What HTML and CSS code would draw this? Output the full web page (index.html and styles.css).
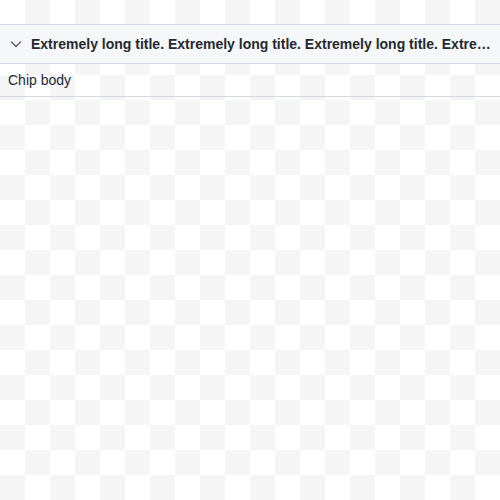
FILE: index.html
```html
<!DOCTYPE html>
<html>
<head>
<meta charset="utf-8">
<link rel="stylesheet" href="styles.css">
</head>
<body>
<div class="page">
  <div class="chip">
    <div class="chip-header">
      <svg class="chevron" width="12" height="12" viewBox="0 0 12 12"><path d="M1.5 4l4.5 4.5 4.5-4.5" fill="none" stroke="#5f6670" stroke-width="1.5" stroke-linecap="round" stroke-linejoin="round"/></svg>
      <span class="chip-title">Extremely long title. Extremely long title. Extremely long title. Extremely long title. Extremely long title.</span>
    </div>
    <div class="chip-body">Chip body</div>
  </div>
</div>
</body>
</html>
```
FILE: styles.css
```css
html, body {
  margin: 0;
  padding: 0;
}
body {
  width: 500px;
  height: 500px;
  font-family: "Liberation Sans", Arial, sans-serif;
  background: repeating-conic-gradient(#f5f5f5 0 25%, #ffffff 0 50%) 0 0 / 50px 50px;
}
.page {
  padding-top: 24px;
}
.chip {
  border-top: 1px solid #d4dae3;
  border-bottom: 1px solid #d4dae3;
}
.chip-header {
  display: flex;
  align-items: center;
  gap: 9px;
  height: 38px;
  padding: 0 8px 0 10px;
  background: #f6f7f9;
  border-bottom: 1px solid #d4dae3;
}
.chevron {
  flex: none;
}
.chip-title {
  font-weight: bold;
  font-size: 14px;
  color: #24292f;
  white-space: nowrap;
  overflow: hidden;
  text-overflow: ellipsis;
}
.chip-body {
  height: 32px;
  line-height: 32px;
  padding: 0 8px;
  font-size: 14px;
  color: #24292f;
}
```
